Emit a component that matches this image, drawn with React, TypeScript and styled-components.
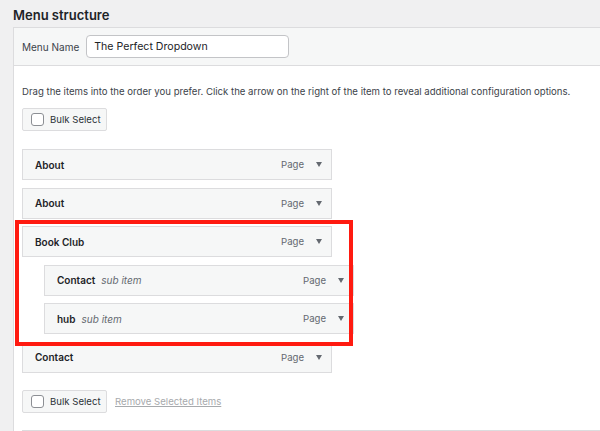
import styled, { createGlobalStyle } from "styled-components";

const GlobalStyle = createGlobalStyle`
  html, body {
    margin: 0;
    padding: 0;
    background: #f0f0f1;
    font-family: Inter, "Noto Sans", sans-serif;
    color: #1d2327;
    overflow: hidden;
  }
`;

interface MenuItem {
  title: string;
  sub?: boolean;
}

const items: MenuItem[] = [
  { title: "About" },
  { title: "About" },
  { title: "Book Club" },
  { title: "Contact", sub: true },
  { title: "hub", sub: true },
  { title: "Contact" },
];

export default function App() {
  return (
    <Page>
      <GlobalStyle />
      <Title>Menu structure</Title>
      <Panel>
        <Header>
          <label>Menu Name</label>
          <NameInput defaultValue="The Perfect Dropdown" />
        </Header>
        <Body>
          <Hint>
            Drag the items into the order you prefer. Click the arrow on the right of the item to reveal
            additional configuration options.
          </Hint>
          <BulkButton>
            <Check />
            Bulk Select
          </BulkButton>
          <List>
            {items.map((item, i) => (
              <Item key={i} $sub={item.sub}>
                <ItemTitle>
                  <strong>{item.title}</strong>
                  {item.sub && <em>sub item</em>}
                </ItemTitle>
                <ItemType>Page</ItemType>
                <Arrow />
              </Item>
            ))}
            <Highlight />
          </List>
          <Footer>
            <BulkButton>
              <Check />
              Bulk Select
            </BulkButton>
            <RemoveLink>Remove Selected Items</RemoveLink>
          </Footer>
          <BottomLine />
        </Body>
      </Panel>
    </Page>
  );
}

const Page = styled.div`
  width: 600px;
  height: 431px;
  overflow: hidden;
`;

const Title = styled.h2`
  margin: 0;
  padding: 7px 0 0 13px;
  height: 27px;
  box-sizing: border-box;
  font-size: 13px;
  font-weight: 600;
  line-height: 16px;
`;

const Panel = styled.div`
  margin-left: 13px;
  width: 640px;
  background: #fff;
  border: 1px solid #dcdcde;
  border-right: none;
`;

const Header = styled.div`
  display: flex;
  align-items: center;
  gap: 7px;
  height: 37px;
  padding: 0 8px;
  background: #f6f7f7;
  border-bottom: 1px solid #dcdcde;
  label {
    font-size: 10px;
    color: #3c434a;
  }
`;

const NameInput = styled.input`
  width: 203px;
  height: 23px;
  box-sizing: border-box;
  border: 1px solid #c3c4c7;
  border-radius: 4px;
  padding: 0 7px;
  font-family: inherit;
  font-size: 10.6px;
  color: #1d2327;
  background: #fff;
  outline: none;
`;

const Body = styled.div`
  padding: 0 8px;
`;

const Hint = styled.p`
  margin: 0;
  padding-top: 19px;
  height: 42px;
  box-sizing: border-box;
  font-size: 9.6px;
  line-height: 13px;
  color: #3c434a;
  white-space: nowrap;
`;

const BulkButton = styled.div`
  display: inline-flex;
  align-items: center;
  gap: 6px;
  width: 85px;
  height: 23px;
  box-sizing: border-box;
  padding-left: 8px;
  background: #f6f7f7;
  border: 1px solid #dcdcde;
  border-radius: 2px;
  font-size: 9.6px;
  color: #2c3338;
`;

const Check = styled.span`
  width: 11px;
  height: 11px;
  border: 1px solid #8c8f94;
  border-radius: 3px;
  background: #fff;
`;

const List = styled.div`
  position: relative;
  display: flex;
  flex-direction: column;
  gap: 7.6px;
  margin-top: 18px;
`;

const Item = styled.div<{ $sub?: boolean }>`
  display: flex;
  align-items: center;
  width: 310px;
  height: 31px;
  box-sizing: border-box;
  margin-left: ${(p) => (p.$sub ? "22px" : "0")};
  padding: 0 9px 0 12px;
  background: #f6f7f7;
  border: 1px solid #dcdcde;
`;

const ItemTitle = styled.div`
  flex: 1;
  display: flex;
  gap: 6px;
  font-size: 10px;
  strong {
    font-weight: 600;
    color: #1d2327;
  }
  em {
    color: #646970;
  }
`;

const ItemType = styled.span`
  font-size: 9.6px;
  color: #646970;
  margin-right: 12px;
`;

const Arrow = styled.span`
  width: 0;
  height: 0;
  border-left: 3.5px solid transparent;
  border-right: 3.5px solid transparent;
  border-top: 5px solid #646970;
`;

const Highlight = styled.div`
  position: absolute;
  left: -7px;
  top: 71px;
  width: 338px;
  height: 126px;
  box-sizing: border-box;
  border: 4px solid #ff1a10;
  pointer-events: none;
`;

const Footer = styled.div`
  display: flex;
  align-items: center;
  gap: 8px;
  margin-top: 17px;
`;

const RemoveLink = styled.span`
  font-size: 9.6px;
  color: #a7aaad;
  text-decoration: underline;
`;

const BottomLine = styled.div`
  margin-top: 17px;
  border-top: 1px solid #dcdcde;
`;
